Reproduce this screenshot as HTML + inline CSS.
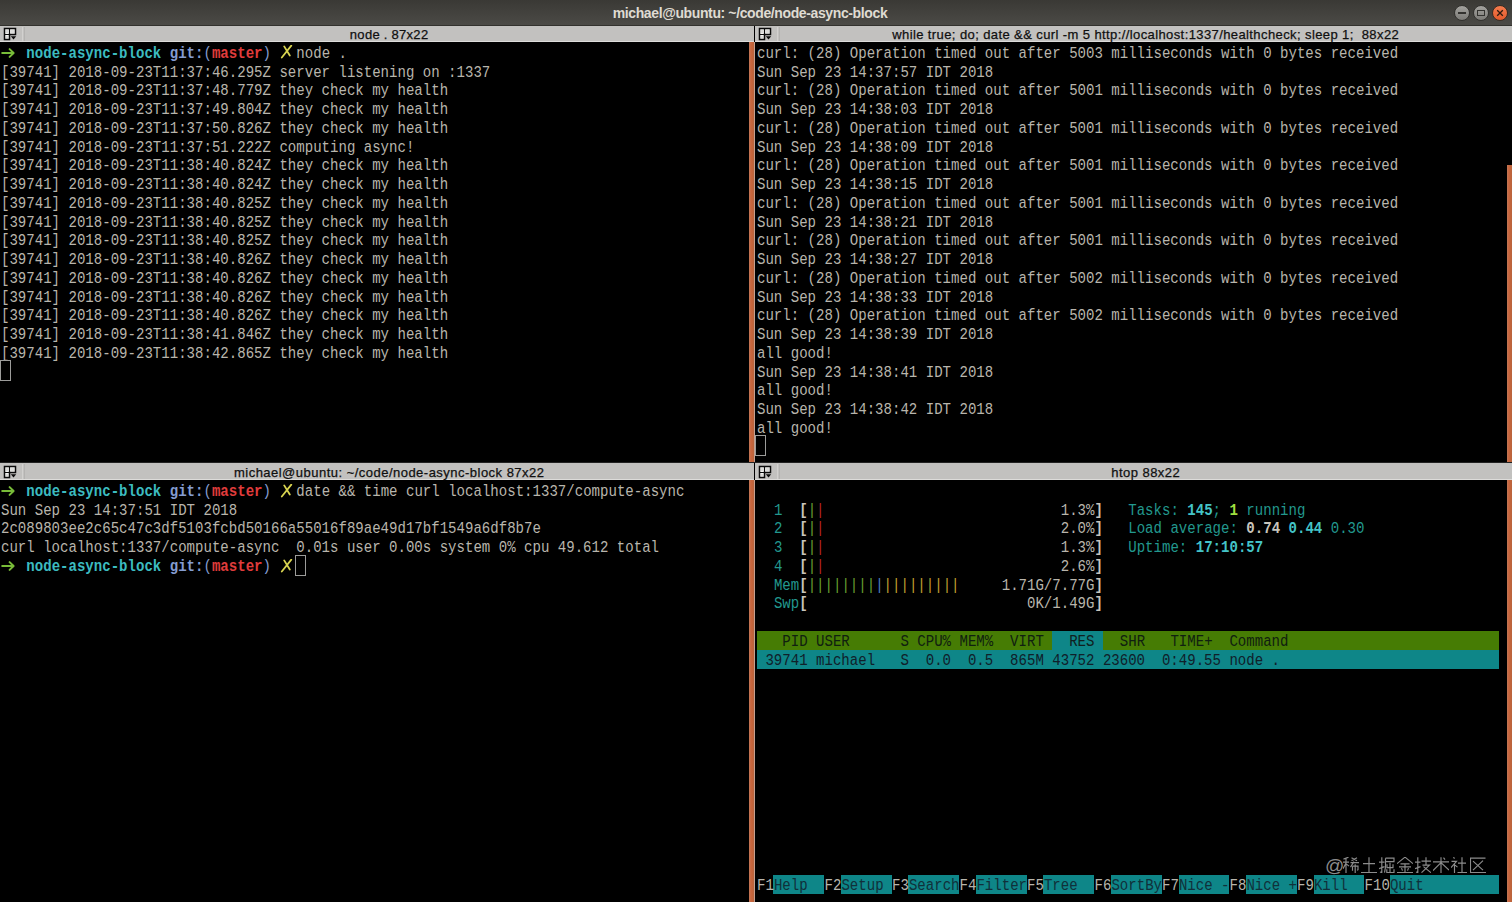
<!DOCTYPE html><html><head><meta charset="utf-8"><style>
*{margin:0;padding:0;box-sizing:border-box}
html,body{width:1512px;height:902px;overflow:hidden;background:#000}
body{position:relative;font-family:"Liberation Sans",sans-serif}
.abs{position:absolute}
.pane{position:absolute;height:420px;transform-origin:0 0;font-family:"Liberation Mono",monospace;font-size:16.66px;color:#b8b5ac;white-space:pre}
.row{position:absolute;left:0;height:18.75px;line-height:18.75px;padding-top:2.4px}
.cur{display:inline-block;outline:1px solid #c8c8c8;outline-offset:-1px;height:18px;vertical-align:-4px}
.xm{color:#d8d450;font-style:italic;font-weight:bold}
.tbar{position:absolute;height:16px;background:#c2c1bf;border-bottom:1px solid #dcdbd9;font-size:13px;color:#1a1a1a;text-align:center;line-height:15px}
.sb{position:absolute;background:linear-gradient(90deg,#c27656,#c9653c 45%,#b8643c);width:5px}
</style></head><body>
<div class="abs" style="left:0;top:0;width:1512px;height:26px;background:linear-gradient(#3a3935,#4b4a46);border-bottom:1px solid #32312d"></div>
<div class="abs" style="left:612.7px;top:3.75px;white-space:pre;font-weight:bold;font-size:14px;color:#dfdbd2;line-height:18px;letter-spacing:-0.38px">michael@ubuntu: ~/code/node-async-block</div>
<div class="abs" style="left:1454px;top:5px;width:16px;height:16px;border-radius:50%;background:linear-gradient(#a3a29e,#7c7b77);border:1px solid #33322f"></div>
<div class="abs" style="left:1458px;top:12px;width:8px;height:1.6px;background:#33322f"></div>
<div class="abs" style="left:1473px;top:5px;width:16px;height:16px;border-radius:50%;background:linear-gradient(#a3a29e,#7c7b77);border:1px solid #33322f"></div>
<div class="abs" style="left:1477px;top:10px;width:8px;height:6px;border:1.2px solid #33322f"></div>
<div class="abs" style="left:1492px;top:5px;width:16px;height:16px;border-radius:50%;background:linear-gradient(#f57c4e,#e25a2c);border:1px solid #3a2c22"></div>
<svg class="abs" style="left:1492px;top:5px" width="16" height="16"><path d="M5.2 5.2l5.6 5.6M10.8 5.2l-5.6 5.6" stroke="#2a1a10" stroke-width="1.3"/></svg>
<div class="abs" style="left:0px;top:26px;width:754px;height:16px;background:#c2c1bf;border-bottom:1px solid #dddcda"></div><div class="abs" style="left:24px;top:26.8px;width:730px;text-align:center;font-size:13px;line-height:16px;color:#101010;-webkit-text-stroke:0.25px #101010;white-space:pre;letter-spacing:0.28px;padding-left:0.28px">node . 87x22</div><svg class="abs" style="left:3px;top:27px" width="14" height="14" viewBox="0 0 14 14"><path d="M1.5 1.5H12.5V7.5H6.5V12.5H1.5Z" fill="#f4f4f2" stroke="#0a0a0a" stroke-width="1.5"/><path d="M6.5 1.5V7.5M1.5 7.5H6.5" stroke="#0a0a0a" stroke-width="1.2"/><path d="M3 3H5V6H3ZM8 3H11V6H8ZM3 9H5V11H3Z" fill="#dcdcda"/><path d="M7.8 9.3H13.2L10.5 12.4Z" fill="#0a0a0a"/></svg><div class="abs" style="left:22px;top:27px;width:1px;height:14px;background:#d2d1cf"></div><div class="abs" style="left:24px;top:27px;width:1px;height:14px;background:#b4b3b1"></div>
<div class="abs" style="left:754px;top:26px;width:1px;height:16px;background:#000"></div>
<div class="abs" style="left:755px;top:26px;width:757px;height:16px;background:#c2c1bf;border-bottom:1px solid #dddcda"></div><div class="abs" style="left:779px;top:26.8px;width:733px;text-align:center;font-size:13px;line-height:16px;color:#101010;-webkit-text-stroke:0.25px #101010;white-space:pre;letter-spacing:0.40px;padding-left:0.40px">while true; do; date &amp;&amp; curl -m 5 http://localhost:1337/healthcheck; sleep 1;  88x22</div><svg class="abs" style="left:758px;top:27px" width="14" height="14" viewBox="0 0 14 14"><path d="M1.5 1.5H12.5V7.5H6.5V12.5H1.5Z" fill="#f4f4f2" stroke="#0a0a0a" stroke-width="1.5"/><path d="M6.5 1.5V7.5M1.5 7.5H6.5" stroke="#0a0a0a" stroke-width="1.2"/><path d="M3 3H5V6H3ZM8 3H11V6H8ZM3 9H5V11H3Z" fill="#dcdcda"/><path d="M7.8 9.3H13.2L10.5 12.4Z" fill="#0a0a0a"/></svg><div class="abs" style="left:777px;top:27px;width:1px;height:14px;background:#d2d1cf"></div><div class="abs" style="left:779px;top:27px;width:1px;height:14px;background:#b4b3b1"></div>
<div class="abs" style="left:0;top:462px;width:1512px;height:1px;background:#222"></div>
<div class="abs" style="left:0px;top:463px;width:754px;height:17px;background:#c2c1bf;border-bottom:1px solid #dddcda"></div><div class="abs" style="left:24px;top:465.4px;width:730px;text-align:center;font-size:13px;line-height:16px;color:#101010;-webkit-text-stroke:0.25px #101010;white-space:pre;letter-spacing:0.48px;padding-left:0.48px">michael@ubuntu: ~/code/node-async-block 87x22</div><svg class="abs" style="left:3px;top:465px" width="14" height="14" viewBox="0 0 14 14"><path d="M1.5 1.5H12.5V7.5H6.5V12.5H1.5Z" fill="#f4f4f2" stroke="#0a0a0a" stroke-width="1.5"/><path d="M6.5 1.5V7.5M1.5 7.5H6.5" stroke="#0a0a0a" stroke-width="1.2"/><path d="M3 3H5V6H3ZM8 3H11V6H8ZM3 9H5V11H3Z" fill="#dcdcda"/><path d="M7.8 9.3H13.2L10.5 12.4Z" fill="#0a0a0a"/></svg><div class="abs" style="left:22px;top:464px;width:1px;height:15px;background:#d2d1cf"></div><div class="abs" style="left:24px;top:464px;width:1px;height:15px;background:#b4b3b1"></div>
<div class="abs" style="left:754px;top:463px;width:1px;height:17px;background:#000"></div>
<div class="abs" style="left:755px;top:463px;width:757px;height:17px;background:#c2c1bf;border-bottom:1px solid #dddcda"></div><div class="abs" style="left:779px;top:465.4px;width:733px;text-align:center;font-size:13px;line-height:16px;color:#101010;-webkit-text-stroke:0.25px #101010;white-space:pre;letter-spacing:0.47px;padding-left:0.47px">htop 88x22</div><svg class="abs" style="left:758px;top:465px" width="14" height="14" viewBox="0 0 14 14"><path d="M1.5 1.5H12.5V7.5H6.5V12.5H1.5Z" fill="#f4f4f2" stroke="#0a0a0a" stroke-width="1.5"/><path d="M6.5 1.5V7.5M1.5 7.5H6.5" stroke="#0a0a0a" stroke-width="1.2"/><path d="M3 3H5V6H3ZM8 3H11V6H8ZM3 9H5V11H3Z" fill="#dcdcda"/><path d="M7.8 9.3H13.2L10.5 12.4Z" fill="#0a0a0a"/></svg><div class="abs" style="left:777px;top:464px;width:1px;height:15px;background:#d2d1cf"></div><div class="abs" style="left:779px;top:464px;width:1px;height:15px;background:#b4b3b1"></div>
<div class="sb" style="left:749px;top:42px;height:420px"></div><div class="abs" style="left:754px;top:42px;width:1px;height:420px;background:#c4a090"></div>
<div class="sb" style="left:1507px;top:165px;height:297px"></div>
<div class="sb" style="left:749px;top:480px;height:422px"></div><div class="abs" style="left:754px;top:480px;width:1px;height:422px;background:#c4a090"></div>
<div class="sb" style="left:1507px;top:480px;height:422px"></div>
<div class="abs" style="left:756.50px;top:631.00px;width:295.40px;height:18.75px;background:#467c04"></div>
<div class="abs" style="left:1051.90px;top:631.00px;width:50.64px;height:18.75px;background:#0e8688"></div>
<div class="abs" style="left:1102.54px;top:631.00px;width:396.68px;height:18.75px;background:#467c04"></div>
<div class="abs" style="left:756.50px;top:649.75px;width:742.72px;height:18.75px;background:#0e8688"></div>
<div class="abs" style="left:773.38px;top:874.75px;width:50.64px;height:18.75px;background:#0e8688"></div>
<div class="abs" style="left:840.90px;top:874.75px;width:50.64px;height:18.75px;background:#0e8688"></div>
<div class="abs" style="left:908.42px;top:874.75px;width:50.64px;height:18.75px;background:#0e8688"></div>
<div class="abs" style="left:975.94px;top:874.75px;width:50.64px;height:18.75px;background:#0e8688"></div>
<div class="abs" style="left:1043.46px;top:874.75px;width:50.64px;height:18.75px;background:#0e8688"></div>
<div class="abs" style="left:1110.98px;top:874.75px;width:50.64px;height:18.75px;background:#0e8688"></div>
<div class="abs" style="left:1178.50px;top:874.75px;width:50.64px;height:18.75px;background:#0e8688"></div>
<div class="abs" style="left:1246.02px;top:874.75px;width:50.64px;height:18.75px;background:#0e8688"></div>
<div class="abs" style="left:1313.54px;top:874.75px;width:50.64px;height:18.75px;background:#0e8688"></div>
<div class="abs" style="left:1389.50px;top:874.75px;width:109.72px;height:18.75px;background:#0e8688"></div>
<div class="pane" style="left:1.00px;top:42.50px;width:870.00px;transform:scaleX(0.84400)">
<div class="row" style="top:0.00px">   <span style="color:#3cbcc0;font-weight:bold">node-async-block</span> <span style="color:#849cd0;font-weight:bold">git:</span><span style="color:#849cd0">(</span><span style="color:#e03c3c;font-weight:bold">master</span><span style="color:#849cd0">)</span>   <span style="">node .</span></div>
<div class="row" style="top:18.75px">[39741] 2018-09-23T11:37:46.295Z server listening on :1337</div>
<div class="row" style="top:37.50px">[39741] 2018-09-23T11:37:48.779Z they check my health</div>
<div class="row" style="top:56.25px">[39741] 2018-09-23T11:37:49.804Z they check my health</div>
<div class="row" style="top:75.00px">[39741] 2018-09-23T11:37:50.826Z they check my health</div>
<div class="row" style="top:93.75px">[39741] 2018-09-23T11:37:51.222Z computing async!</div>
<div class="row" style="top:112.50px">[39741] 2018-09-23T11:38:40.824Z they check my health</div>
<div class="row" style="top:131.25px">[39741] 2018-09-23T11:38:40.824Z they check my health</div>
<div class="row" style="top:150.00px">[39741] 2018-09-23T11:38:40.825Z they check my health</div>
<div class="row" style="top:168.75px">[39741] 2018-09-23T11:38:40.825Z they check my health</div>
<div class="row" style="top:187.50px">[39741] 2018-09-23T11:38:40.825Z they check my health</div>
<div class="row" style="top:206.25px">[39741] 2018-09-23T11:38:40.826Z they check my health</div>
<div class="row" style="top:225.00px">[39741] 2018-09-23T11:38:40.826Z they check my health</div>
<div class="row" style="top:243.75px">[39741] 2018-09-23T11:38:40.826Z they check my health</div>
<div class="row" style="top:262.50px">[39741] 2018-09-23T11:38:40.826Z they check my health</div>
<div class="row" style="top:281.25px">[39741] 2018-09-23T11:38:41.846Z they check my health</div>
<div class="row" style="top:300.00px">[39741] 2018-09-23T11:38:42.865Z they check my health</div>

</div>
<div class="pane" style="left:756.50px;top:42.50px;width:880.00px;transform:scaleX(0.84400)">
<div class="row" style="top:0.00px">curl: (28) Operation timed out after 5003 milliseconds with 0 bytes received</div>
<div class="row" style="top:18.75px">Sun Sep 23 14:37:57 IDT 2018</div>
<div class="row" style="top:37.50px">curl: (28) Operation timed out after 5001 milliseconds with 0 bytes received</div>
<div class="row" style="top:56.25px">Sun Sep 23 14:38:03 IDT 2018</div>
<div class="row" style="top:75.00px">curl: (28) Operation timed out after 5001 milliseconds with 0 bytes received</div>
<div class="row" style="top:93.75px">Sun Sep 23 14:38:09 IDT 2018</div>
<div class="row" style="top:112.50px">curl: (28) Operation timed out after 5001 milliseconds with 0 bytes received</div>
<div class="row" style="top:131.25px">Sun Sep 23 14:38:15 IDT 2018</div>
<div class="row" style="top:150.00px">curl: (28) Operation timed out after 5001 milliseconds with 0 bytes received</div>
<div class="row" style="top:168.75px">Sun Sep 23 14:38:21 IDT 2018</div>
<div class="row" style="top:187.50px">curl: (28) Operation timed out after 5001 milliseconds with 0 bytes received</div>
<div class="row" style="top:206.25px">Sun Sep 23 14:38:27 IDT 2018</div>
<div class="row" style="top:225.00px">curl: (28) Operation timed out after 5002 milliseconds with 0 bytes received</div>
<div class="row" style="top:243.75px">Sun Sep 23 14:38:33 IDT 2018</div>
<div class="row" style="top:262.50px">curl: (28) Operation timed out after 5002 milliseconds with 0 bytes received</div>
<div class="row" style="top:281.25px">Sun Sep 23 14:38:39 IDT 2018</div>
<div class="row" style="top:300.00px">all good!</div>
<div class="row" style="top:318.75px">Sun Sep 23 14:38:41 IDT 2018</div>
<div class="row" style="top:337.50px">all good!</div>
<div class="row" style="top:356.25px">Sun Sep 23 14:38:42 IDT 2018</div>
<div class="row" style="top:375.00px">all good!</div>

</div>
<div class="pane" style="left:1.00px;top:480.50px;width:870.00px;transform:scaleX(0.84400)">
<div class="row" style="top:0.00px">   <span style="color:#3cbcc0;font-weight:bold">node-async-block</span> <span style="color:#849cd0;font-weight:bold">git:</span><span style="color:#849cd0">(</span><span style="color:#e03c3c;font-weight:bold">master</span><span style="color:#849cd0">)</span>   <span style="">date &amp;&amp; time curl localhost:1337/compute-async</span></div>
<div class="row" style="top:18.75px">Sun Sep 23 14:37:51 IDT 2018</div>
<div class="row" style="top:37.50px">2c089803ee2c65c47c3df5103fcbd50166a55016f89ae49d17bf1549a6df8b7e</div>
<div class="row" style="top:56.25px">curl localhost:1337/compute-async  0.01s user 0.00s system 0% cpu 49.612 total</div>
<div class="row" style="top:75.00px">   <span style="color:#3cbcc0;font-weight:bold">node-async-block</span> <span style="color:#849cd0;font-weight:bold">git:</span><span style="color:#849cd0">(</span><span style="color:#e03c3c;font-weight:bold">master</span><span style="color:#849cd0">)</span>   <span style=""></span></div>

</div>
<div class="pane" style="left:756.50px;top:480.50px;width:880.00px;transform:scaleX(0.84400)">
<div class="row" style="top:18.75px">  <span style="color:#22988e">1</span>  <span style="color:#c8c5bc;font-weight:bold">[</span><span style="color:#6aa030">|</span><span style="color:#b82424">|</span>                            <span style="color:#b8b5ac">1.3%</span><span style="color:#c8c5bc;font-weight:bold">]</span>   <span style="color:#22988e">Tasks: </span><span style="color:#44c4c8;font-weight:bold">145</span><span style="color:#22988e">; </span><span style="color:#a0e040;font-weight:bold">1</span><span style="color:#22988e"> running</span></div>
<div class="row" style="top:37.50px">  <span style="color:#22988e">2</span>  <span style="color:#c8c5bc;font-weight:bold">[</span><span style="color:#6aa030">|</span><span style="color:#b82424">|</span>                            <span style="color:#b8b5ac">2.0%</span><span style="color:#c8c5bc;font-weight:bold">]</span>   <span style="color:#22988e">Load average: </span><span style="color:#c8c5bc;font-weight:bold">0.74 </span><span style="color:#44c4c8;font-weight:bold">0.44 </span><span style="color:#22988e">0.30</span></div>
<div class="row" style="top:56.25px">  <span style="color:#22988e">3</span>  <span style="color:#c8c5bc;font-weight:bold">[</span><span style="color:#6aa030">|</span><span style="color:#b82424">|</span>                            <span style="color:#b8b5ac">1.3%</span><span style="color:#c8c5bc;font-weight:bold">]</span>   <span style="color:#22988e">Uptime: </span><span style="color:#44c4c8;font-weight:bold">17:10:57</span></div>
<div class="row" style="top:75.00px">  <span style="color:#22988e">4</span>  <span style="color:#c8c5bc;font-weight:bold">[</span><span style="color:#6aa030">|</span><span style="color:#b82424">|</span>                            <span style="color:#b8b5ac">2.6%</span><span style="color:#c8c5bc;font-weight:bold">]</span>   </div>
<div class="row" style="top:93.75px">  <span style="color:#22988e">Mem</span><span style="color:#c8c5bc;font-weight:bold">[</span><span style="color:#6aa030">||||||||</span><span style="color:#5080c0">|</span><span style="color:#c0a030">|||||||||</span>     <span style="color:#b8b5ac">1.71G/7.77G</span><span style="color:#c8c5bc;font-weight:bold">]</span></div>
<div class="row" style="top:112.50px">  <span style="color:#22988e">Swp</span><span style="color:#c8c5bc;font-weight:bold">[</span>                          <span style="color:#b8b5ac">0K/1.49G</span><span style="color:#c8c5bc;font-weight:bold">]</span></div>
<div class="row" style="top:150.00px"><span style="color:#102010">   PID USER      S CPU% MEM%  VIRT </span><span style="color:#102020">  RES </span><span style="color:#102010">  SHR   TIME+  Command                         </span></div>
<div class="row" style="top:168.75px"><span style="color:#10202a"> 39741 michael   S  0.0  0.5  865M 43752 23600  0:49.55 node .                          </span></div>
<div class="row" style="top:393.75px"><span style="color:#b8b5ac">F1</span><span style="color:#10303a">Help  </span><span style="color:#b8b5ac">F2</span><span style="color:#10303a">Setup </span><span style="color:#b8b5ac">F3</span><span style="color:#10303a">Search</span><span style="color:#b8b5ac">F4</span><span style="color:#10303a">Filter</span><span style="color:#b8b5ac">F5</span><span style="color:#10303a">Tree  </span><span style="color:#b8b5ac">F6</span><span style="color:#10303a">SortBy</span><span style="color:#b8b5ac">F7</span><span style="color:#10303a">Nice -</span><span style="color:#b8b5ac">F8</span><span style="color:#10303a">Nice +</span><span style="color:#b8b5ac">F9</span><span style="color:#10303a">Kill  </span><span style="color:#b8b5ac">F10</span><span style="color:#10303a">Quit         </span></div>

</div>
<svg class="abs" style="left:0;top:46.6px" width="18" height="12" viewBox="0 0 18 12"><path d="M2.2 6h11.2M9.6 2.1l4 3.9-4 3.9" fill="none" stroke="#78bc38" stroke-width="2" stroke-linecap="round" stroke-linejoin="round"/></svg>
<svg class="abs" style="left:279px;top:45.0px" width="16" height="16" viewBox="0 0 16 16"><path d="M5.2 1.4L10.8 10.5M12.3 0.6L2.8 12.5" fill="none" stroke="#d8d450" stroke-width="1.8" stroke-linecap="round"/></svg>
<svg class="abs" style="left:0;top:485.1px" width="18" height="12" viewBox="0 0 18 12"><path d="M2.2 6h11.2M9.6 2.1l4 3.9-4 3.9" fill="none" stroke="#78bc38" stroke-width="2" stroke-linecap="round" stroke-linejoin="round"/></svg>
<svg class="abs" style="left:279px;top:484.0px" width="16" height="16" viewBox="0 0 16 16"><path d="M5.2 1.4L10.8 10.5M12.3 0.6L2.8 12.5" fill="none" stroke="#d8d450" stroke-width="1.8" stroke-linecap="round"/></svg>
<svg class="abs" style="left:0;top:560.1px" width="18" height="12" viewBox="0 0 18 12"><path d="M2.2 6h11.2M9.6 2.1l4 3.9-4 3.9" fill="none" stroke="#78bc38" stroke-width="2" stroke-linecap="round" stroke-linejoin="round"/></svg>
<svg class="abs" style="left:279px;top:559.0px" width="16" height="16" viewBox="0 0 16 16"><path d="M5.2 1.4L10.8 10.5M12.3 0.6L2.8 12.5" fill="none" stroke="#d8d450" stroke-width="1.8" stroke-linecap="round"/></svg>
<div class="abs" style="left:0.4px;top:360.4px;width:11px;height:20.6px;border:1.2px solid #9c9c9a"></div>
<div class="abs" style="left:755.2px;top:435.4px;width:11px;height:20.6px;border:1.2px solid #9c9c9a"></div>
<div class="abs" style="left:295.0px;top:555.2px;width:11px;height:20.6px;border:1.2px solid #9c9c9a"></div>
<div class="abs" style="left:1325px;top:856px;font-size:19px;color:#8c8c8c;font-family:'Liberation Sans',sans-serif;line-height:20px">@</div><svg class="abs" style="left:1342.8px;top:856.6px" width="16" height="16.3" viewBox="0 0 16 16"><path d="M5.5 0L0.5 2M0 5H6M3 1.5V16M3 6L0 11.5M3.5 7L6 9M8.5 0.5L14 3.5M14 0.5L8.5 3.5M7.5 5.5H16M11 4.5L7.5 10M9.5 9V13.5M9.5 9H15V12.5L14 13M12.2 7V16" fill="none" stroke="#8c8c8c" stroke-width="1.15"/></svg><svg class="abs" style="left:1360.9px;top:856.6px" width="16" height="16.3" viewBox="0 0 16 16"><path d="M2 6.5H14M8 0V15.5M0 15.5H16" fill="none" stroke="#8c8c8c" stroke-width="1.15"/></svg><svg class="abs" style="left:1379.0px;top:856.6px" width="16" height="16.3" viewBox="0 0 16 16"><path d="M0 5H5.5M2.8 0V15.5L1 14.8M0 11.5L5.5 9.5M6.5 1H15V4.5H6.5M6.5 1V10L5.5 15.5M11 5.5V15.5M8 7V10.5H14V7M7.8 12V15.5H15V12" fill="none" stroke="#8c8c8c" stroke-width="1.15"/></svg><svg class="abs" style="left:1397.1px;top:856.6px" width="16" height="16.3" viewBox="0 0 16 16"><path d="M8 0L0 6.5M8 0L16 6.5M3.5 6.8H12.5M2 9.8H14M8 6.8V15.5M4.5 11L5.5 13.5M11.5 11L10.5 13.5M0 15.5H16" fill="none" stroke="#8c8c8c" stroke-width="1.15"/></svg><svg class="abs" style="left:1415.2px;top:856.6px" width="16" height="16.3" viewBox="0 0 16 16"><path d="M0 5H5.5M2.8 0V15.5L1 14.8M0 11.5L5.5 9.5M6.5 4H16M11 0V7.5M7.5 8H14.5L6.5 15.5M8.5 9.5L16 15.5" fill="none" stroke="#8c8c8c" stroke-width="1.15"/></svg><svg class="abs" style="left:1433.3px;top:856.6px" width="16" height="16.3" viewBox="0 0 16 16"><path d="M0 4.8H16M8 0V16M8 5.5L0 13.5M8 5.5L16 13M10.5 0.5L12 2.5" fill="none" stroke="#8c8c8c" stroke-width="1.15"/></svg><svg class="abs" style="left:1451.4px;top:856.6px" width="16" height="16.3" viewBox="0 0 16 16"><path d="M2.5 0L3.5 1.5M0.5 4.2H5.5L0 10.5M3.5 7V16M4 8L6.5 10M7 6H15M11 0V15.5M6.5 15.5H16" fill="none" stroke="#8c8c8c" stroke-width="1.15"/></svg><svg class="abs" style="left:1469.5px;top:856.6px" width="16" height="16.3" viewBox="0 0 16 16"><path d="M15.5 1H0.5V15.5H16M3 4L13 13M13 3.5L3 13" fill="none" stroke="#8c8c8c" stroke-width="1.15"/></svg>
</body></html>
